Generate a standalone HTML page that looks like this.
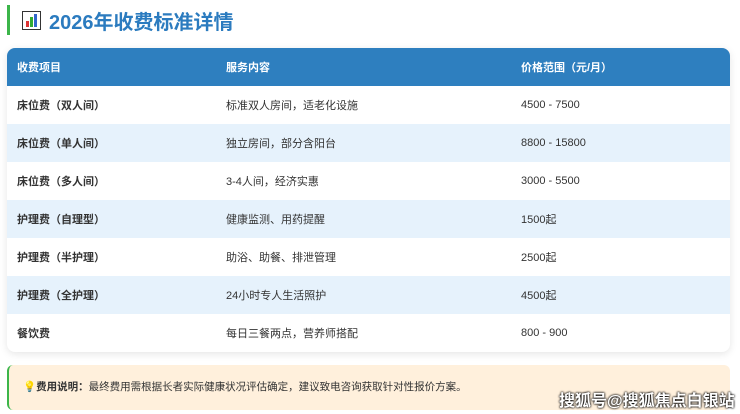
<!DOCTYPE html>
<html><head><meta charset="utf-8"><style>
*{margin:0;padding:0;box-sizing:border-box}
body{width:740px;height:414px;background:#fff;font-family:"Liberation Sans","Noto Sans CJK SC",sans-serif;position:relative;overflow:hidden}
.title{position:absolute;left:7px;top:5px;height:30px;border-left:3px solid #3cb54a;padding-left:12px;display:flex;align-items:center}
.title span{font-size:20px;font-weight:bold;color:#2b7bbf;margin-left:8px}
.tbl{position:absolute;left:7px;top:48px;width:723px;border-radius:8px;overflow:hidden;box-shadow:0 2px 8px rgba(0,0,0,.1)}
.row{display:flex;height:38px;align-items:center;font-size:11px;color:#333}
.row div{position:absolute}
.row{position:relative}
.c1{left:10px;font-weight:bold}.c2{left:219px}.c3{left:514px}
.hd{background:#2e7fbf;color:#fff;font-weight:bold}
.hd div{font-weight:bold}
.alt{background:#e6f2fc}
.note{position:absolute;left:7px;top:365px;width:723px;height:45px;background:#fff0dc;border-left:2px solid #3cb54a;border-radius:6px;font-size:10.5px;color:#333;padding:14px 0 0 14px}
.wm{position:absolute;left:559px;top:387px;font-size:16px;font-weight:bold;color:#fff;text-shadow:0 0 2px #000,0 0 2px #000;letter-spacing:0}
</style></head><body>
<div class="title"><svg width="19" height="19" viewBox="0 0 19 19"><rect x=".5" y=".5" width="18" height="18" fill="#fff" stroke="#333"/><rect x="4" y="10" width="3" height="6" fill="#d33"/><rect x="8" y="6" width="3" height="10" fill="#3a3"/><rect x="12" y="3" width="3" height="13" fill="#36c"/></svg><span>2026年收费标准详情</span></div>
<div class="tbl">
<div class="row hd"><div class="c1">收费项目</div><div class="c2">服务内容</div><div class="c3">价格范围（元/月）</div></div>
<div class="row"><div class="c1">床位费（双人间）</div><div class="c2">标准双人房间，适老化设施</div><div class="c3">4500 - 7500</div></div>
<div class="row alt"><div class="c1">床位费（单人间）</div><div class="c2">独立房间，部分含阳台</div><div class="c3">8800 - 15800</div></div>
<div class="row"><div class="c1">床位费（多人间）</div><div class="c2">3-4人间，经济实惠</div><div class="c3">3000 - 5500</div></div>
<div class="row alt"><div class="c1">护理费（自理型）</div><div class="c2">健康监测、用药提醒</div><div class="c3">1500起</div></div>
<div class="row"><div class="c1">护理费（半护理）</div><div class="c2">助浴、助餐、排泄管理</div><div class="c3">2500起</div></div>
<div class="row alt"><div class="c1">护理费（全护理）</div><div class="c2">24小时专人生活照护</div><div class="c3">4500起</div></div>
<div class="row"><div class="c1">餐饮费</div><div class="c2">每日三餐两点，营养师搭配</div><div class="c3">800 - 900</div></div>
</div>
<div class="note"><span style="color:#e0a020">💡</span><b>费用说明：</b>最终费用需根据长者实际健康状况评估确定，建议致电咨询获取针对性报价方案。</div>
<div class="wm">搜狐号@搜狐焦点白银站</div>
</body></html>
